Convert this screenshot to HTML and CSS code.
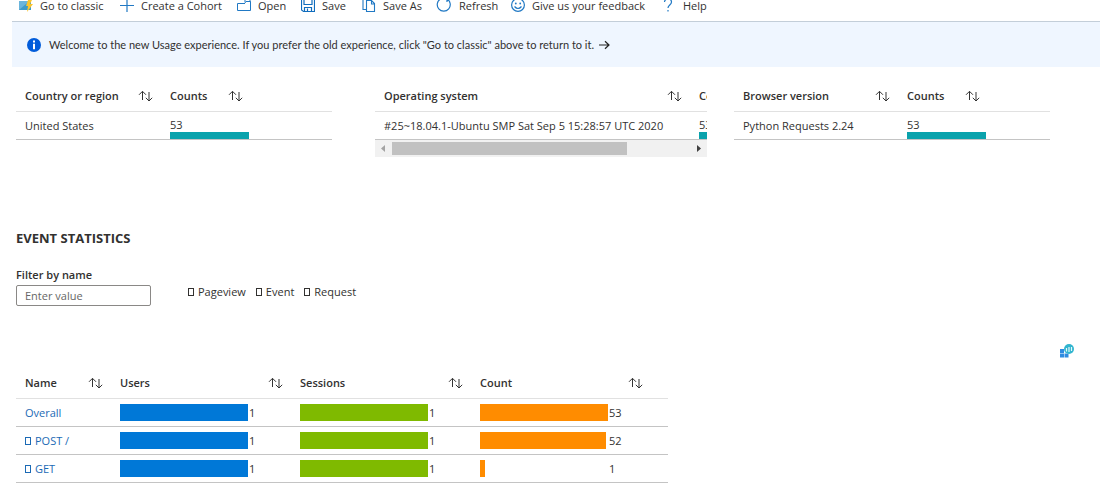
FILE: index.html
```html
<!DOCTYPE html>
<html lang="en">
<head>
<meta charset="utf-8">
<title>Usage - Events</title>
<link rel="stylesheet" href="styles.css">
</head>
<body>
<svg class="defs" aria-hidden="true">
  <symbol id="sort" viewBox="0 0 15 12"><path d="M4.5 10V1.5M1 4.8l3.5-3.5L8 4.8M11 2v9M7.8 7.8L11 11l3.2-3.2" fill="none" stroke="#333" stroke-width="1"/></symbol>
</svg>
<nav class="toolbar" aria-label="Commands">
  <button class="cmd" type="button">
    <svg class="icon" viewBox="0 0 14 14"><path d="M0 2h12v9H0z" fill="#6bb5dc"/><path d="M0 11l7-6 5-3v9z" fill="#3e9bc9"/><path d="M9 1h4l-2 4h3l-6 8 1-6H7z" fill="#fbc52d"/></svg>
    <span>Go to classic</span></button>
  <button class="cmd cmd-cohort" type="button">
    <svg class="icon" viewBox="0 0 14 14"><path d="M7 0v13M0 6.500h14" fill="none" stroke="#2179c4" stroke-width="1.2"/></svg>
    <span>Create a Cohort</span></button>
  <button class="cmd cmd-open" type="button">
    <svg class="icon" viewBox="0 0 14 14"><path d="M8 4.500H.5v7h13v-9H9l-1.500 2M8 3V0h5v3" fill="none" stroke="#2179c4"/></svg>
    <span>Open</span></button>
  <button class="cmd cmd-save" type="button">
    <svg class="icon" viewBox="0 0 14 14"><path d="M.5 0v11l2 1.500h11V0M3 0v5.500h8V0M3.500 12.500v-4h7v4M6.500 9.500v3" fill="none" stroke="#0f6cbd" stroke-width="1.2"/></svg>
    <span>Save</span></button>
  <button class="cmd cmd-saveas" type="button">
    <svg class="icon" viewBox="0 0 14 14"><path d="M4 10.500H1V0M4.500 1.500h5l3 3v8h-8zM9.500 1.500v3.500h3" fill="none" stroke="#2179c4" stroke-width="1.1"/></svg>
    <span>Save As</span></button>
  <button class="cmd cmd-refresh" type="button">
    <svg class="icon wide" viewBox="0 0 16 14"><path d="M4.500 0A6.500 6.500 0 1 0 11 0M11 3V0h3" fill="none" stroke="#2179c4" stroke-width="1.200"/></svg>
    <span>Refresh</span></button>
  <button class="cmd cmd-feedback" type="button">
    <svg class="icon" viewBox="0 0 14 14"><circle cx="7" cy="6" r="6.400" fill="none" stroke="#2179c4" stroke-width="1.200"/><circle cx="4.800" cy="4.500" r=".9" fill="#2179c4"/><circle cx="9.200" cy="4.500" r=".9" fill="#2179c4"/><path d="M3.500 7.500q3.500 4 7 0" fill="none" stroke="#2179c4" stroke-width="1.200"/></svg>
    <span>Give us your feedback</span></button>
  <button class="cmd cmd-help" type="button">
    <svg class="icon narrow" viewBox="0 0 10 14"><path d="M1.500 3c0-4 7-4 7 0 0 3-3.500 3-3.500 6M5 11v1.500" fill="none" stroke="#2179c4" stroke-width="1.200"/></svg>
    <span>Help</span></button>
</nav>
<div class="banner" role="status">
  <svg class="info" viewBox="0 0 14 14" aria-hidden="true"><circle cx="7" cy="7" r="7" fill="#015cda"/><path d="M7 2.500v2M7 5.700v5.600" stroke="#fff" stroke-width="2"/></svg>
  <span>Welcome to the new Usage experience. If you prefer the old experience, click "Go to classic" above to return to it.</span>
  <svg class="arrow" viewBox="0 0 11 10" aria-hidden="true"><path d="M0 5h10M6 1.200L10 5 6 8.800" fill="none" stroke="#222" stroke-width="1.200"/></svg>
</div>
<main>
  <section class="cards">
    <div class="card">
      <table class="grid">
        <colgroup><col class="c-country"><col class="c-counts"><col></colgroup>
        <thead><tr>
          <th><button class="sort" type="button">Country or region<svg><use href="#sort"/></svg></button></th>
          <th><button class="sort" type="button">Counts<svg><use href="#sort"/></svg></button></th><th></th></tr></thead>
        <tbody><tr><td>United States</td><td class="meter"><span>53</span><div class="underbar"></div></td><td></td></tr></tbody>
      </table>
    </div>
    <div class="card card-os">
      <table class="grid grid-os">
        <colgroup><col class="c-os"><col class="c-counts"></colgroup>
        <thead><tr>
          <th><button class="sort" type="button">Operating system<svg><use href="#sort"/></svg></button></th>
          <th><button class="sort" type="button">Counts<svg><use href="#sort"/></svg></button></th></tr></thead>
        <tbody><tr><td>#25~18.04.1-Ubuntu SMP Sat Sep 5 15:28:57 UTC 2020</td><td class="meter"><span>53</span><div class="underbar"></div></td></tr></tbody>
      </table>
      <div class="scroll" aria-hidden="true">
        <svg viewBox="0 0 17 17"><path d="M10 5v7L6 8.500z" fill="#a3a3a3"/></svg>
        <div class="track"><div class="thumb"></div></div>
        <svg viewBox="0 0 17 17"><path d="M7 5v7l4-3.500z" fill="#404040"/></svg>
      </div>
    </div>
    <div class="card">
      <table class="grid">
        <colgroup><col class="c-browser"><col class="c-counts"><col></colgroup>
        <thead><tr>
          <th><button class="sort" type="button">Browser version<svg><use href="#sort"/></svg></button></th>
          <th><button class="sort" type="button">Counts<svg><use href="#sort"/></svg></button></th><th></th></tr></thead>
        <tbody><tr><td>Python Requests 2.24</td><td class="meter"><span>53</span><div class="underbar"></div></td><td></td></tr></tbody>
      </table>
    </div>
  </section>

  <h2>EVENT STATISTICS</h2>
  <div class="filters">
    <div class="field">
      <label for="filter">Filter by name</label>
      <input id="filter" type="text" placeholder="Enter value">
    </div>
    <div class="legend">
      <span><i class="box"></i>Pageview</span>
      <span><i class="box"></i>Event</span>
      <span><i class="box"></i>Request</span>
    </div>
  </div>

  <div class="actions">
    <button class="logs" type="button" aria-label="Open in logs">
      <svg viewBox="0 0 14 14"><path d="M0 5h4v4H0zM0 9.500h4v4H0zM4.500 9.500h4v4h-4z" fill="#2f8be0"/><circle cx="9" cy="5" r="5" fill="#32b5cf"/><path d="M6.500 4v3.500M9 3v5M11.500 3v4" stroke="#e6fafd" stroke-width="1.200"/></svg>
    </button>
  </div>

  <table class="grid events">
    <colgroup><col class="c-name"><col class="c-stat"><col class="c-stat"><col class="c-stat"><col></colgroup>
    <thead><tr>
      <th><button class="sort" type="button">Name<svg><use href="#sort"/></svg></button></th>
      <th><button class="sort" type="button">Users<svg><use href="#sort"/></svg></button></th>
      <th><button class="sort" type="button">Sessions<svg><use href="#sort"/></svg></button></th>
      <th><button class="sort" type="button">Count<svg><use href="#sort"/></svg></button></th><th></th></tr></thead>
    <tbody>
      <tr><td><a href="#overall">Overall</a></td>
        <td><div class="stat"><div class="bar"><div class="fill users" style="width:100%"></div></div>1</div></td>
        <td><div class="stat"><div class="bar"><div class="fill sessions" style="width:100%"></div></div>1</div></td>
        <td><div class="stat"><div class="bar"><div class="fill count" style="width:100%"></div></div>53</div></td><td></td></tr>
      <tr><td><a href="#post"><i class="box"></i>POST /</a></td>
        <td><div class="stat"><div class="bar"><div class="fill users" style="width:100%"></div></div>1</div></td>
        <td><div class="stat"><div class="bar"><div class="fill sessions" style="width:100%"></div></div>1</div></td>
        <td><div class="stat"><div class="bar"><div class="fill count" style="width:98.2%"></div></div>52</div></td><td></td></tr>
      <tr><td><a href="#get"><i class="box"></i>GET</a></td>
        <td><div class="stat"><div class="bar"><div class="fill users" style="width:100%"></div></div>1</div></td>
        <td><div class="stat"><div class="bar"><div class="fill sessions" style="width:100%"></div></div>1</div></td>
        <td><div class="stat"><div class="bar"><div class="fill count" style="width:4%"></div></div>1</div></td><td></td></tr>
    </tbody>
  </table>
</main>
</body>
</html>
```
FILE: styles.css
```css
* { box-sizing: border-box; }
body {
  margin: 0;
  background: #fff;
  color: #323130;
  font: 11px/16px "Open Sans", "Noto Sans", sans-serif;
}
button { border: 0; padding: 0; background: none; color: inherit; font: inherit; cursor: pointer; }
svg { display: block; flex: none; }
.defs { display: none; }

.toolbar { display: flex; margin-left: 12px; padding: 0 0 9px 7px; border-bottom: 1px solid #c3ced9; }
.cmd { display: flex; align-items: center; gap: 7px; width: 101px; height: 12px; line-height: 12px; white-space: nowrap; text-align: left; }
.icon { width: 14px; height: 14px; }
.icon.wide { width: 16px; }
.icon.narrow { width: 10px; }
.cmd-cohort { width: 117px; }
.cmd-open { width: 64px; }
.cmd-save { width: 61px; }
.cmd-saveas { width: 74px; }
.cmd-refresh { width: 75px; }
.cmd-feedback { width: 152px; }
.cmd-help { width: auto; gap: 10px; }

.banner {
  display: flex;
  align-items: center;
  margin-left: 12px;
  padding: 15px;
  background: #eff6ff;
  font-family: Lato, "Open Sans", sans-serif;
  line-height: 15px;
}
.info { width: 14px; height: 14px; margin-right: 8px; }
.arrow { width: 11px; height: 10px; margin-left: 5px; }

main { padding: 14px 7px 6px 16px; }
.cards { display: grid; grid-template-columns: repeat(3, 1fr); height: 148px; align-items: start; }
.card { width: 88%; }
.card-os { width: 332px; overflow: hidden; }

.grid { width: 100%; table-layout: fixed; border-collapse: separate; border-spacing: 0; white-space: nowrap; }
.grid-os { width: 405px; }
.c-country { width: 145px; }
.c-browser { width: 164px; }
.c-os { width: 315px; }
.c-counts { width: 90px; }
.c-name { width: 95px; }
.c-stat { width: 180px; }
th { height: 31px; padding: 0 8px 0 9px; border-bottom: 1px solid #e1e1e1; text-align: left; }
td { height: 28px; padding: 0 0 0 9px; border-bottom: 1px solid #c4c4c4; }
.sort { display: flex; width: 100%; align-items: center; justify-content: space-between; font-weight: 600; }
.sort svg { width: 15px; height: 12px; }
td.meter { vertical-align: bottom; line-height: 15px; }
.meter span { display: block; }
.underbar { width: 79px; height: 7px; background: #0aa2ac; }

.scroll { display: flex; height: 17px; background: #f1f1f1; }
.scroll svg { width: 17px; height: 17px; }
.track { flex: 1; padding: 2px 0; }
.thumb { width: 79%; height: 13px; background: #c1c1c1; }

h2 { margin: 0 0 20px; font-size: 13px; line-height: 18px; font-weight: 700; }
.filters { display: flex; align-items: end; gap: 37px; }
.field { width: 135px; }
.field label { display: block; margin-bottom: 2px; font-weight: 600; }
.field input {
  display: block;
  width: 100%;
  height: 21px;
  padding: 0 8px;
  border: 1px solid #8a8886;
  border-radius: 2px;
  font: inherit;
}
.field input::placeholder { color: #666; opacity: 1; }
.legend { display: flex; gap: 10px; padding-bottom: 6px; }
.box { display: inline-block; width: 6px; height: 8px; margin-right: 4px; border: 1px solid currentColor; }

.actions { display: flex; justify-content: flex-end; padding: 38px 19px 10px 0; }
.logs svg { width: 14px; height: 14px; }
.events { width: 652px; }
.events a { color: #1b6ab5; text-decoration: none; }
.stat { display: flex; align-items: center; gap: 1px; }
.bar { width: 128px; height: 17px; }
.fill { height: 100%; }
.users { background: #0078d7; }
.sessions { background: #7fba00; }
.count { background: #ff8c00; }
```
